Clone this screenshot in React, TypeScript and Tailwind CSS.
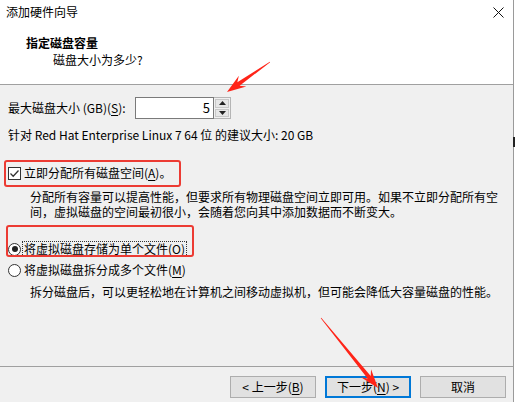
import React from 'react';

const FONT = "font-['Noto_Sans_CJK_SC','Noto_Sans',sans-serif]";

// red annotation arrow: thin tail, swept arrowhead
const Arrow: React.FC<{ x1: number; y1: number; x2: number; y2: number }> = ({ x1, y1, x2, y2 }) => {
  const len = Math.hypot(x2 - x1, y2 - y1);
  const dx = (x2 - x1) / len;
  const dy = (y2 - y1) / len;
  const nx = -dy;
  const ny = dx;
  const L = 19;
  const W = 6.5;
  const bx = x2 - dx * L;
  const by = y2 - dy * L;
  const sx = x2 - dx * (L - 5);
  const sy = y2 - dy * (L - 5);
  const pts = [
    [x1 + nx * 0.3, y1 + ny * 0.3],
    [sx + nx * 2, sy + ny * 2],
    [bx + nx * W, by + ny * W],
    [x2, y2],
    [bx - nx * W, by - ny * W],
    [sx - nx * 2, sy - ny * 2],
    [x1 - nx * 0.3, y1 - ny * 0.3],
  ]
    .map((p) => p.join(','))
    .join(' ');
  return <polygon points={pts} fill="#ff2418" />;
};

const U: React.FC<{ children: React.ReactNode }> = ({ children }) => (
  <span className="underline underline-offset-2 decoration-1">{children}</span>
);

const Button: React.FC<{ children: React.ReactNode; focused?: boolean }> = ({ children, focused }) => (
  <div
    className={`w-[86px] h-[22px] flex items-center justify-center bg-[#e1e1e1] leading-none ${
      focused ? 'border-2 border-[#0078d7]' : 'border border-[#adadad]'
    }`}
  >
    {children}
  </div>
);

const App: React.FC = () => {
  return (
    <div className={`${FONT} relative w-[515px] h-[402px] overflow-hidden bg-white text-[12px] text-black pr-[1px]`}>
      <div className="h-full flex flex-col border-r border-[#9a9a9a]">
        {/* title bar */}
        <div className="h-[24px] flex items-center justify-between pl-[6px] pr-[9px]">
          <span className="leading-none">添加硬件向导</span>
          <svg width="11" height="11" viewBox="0 0 11 11">
            <path d="M0.5 0.5 L10.5 10.5 M10.5 0.5 L0.5 10.5" stroke="#111" strokeWidth="1" />
          </svg>
        </div>

        {/* header */}
        <div className="h-[61px] flex flex-col pl-[26px] pt-[11px] bg-white border-b border-[#a0a0a0]">
          <div className="leading-[16px] font-bold">指定磁盘容量</div>
          <div className="leading-[17px] pl-[27px]">磁盘大小为多少?</div>
        </div>

        {/* body */}
        <div className="flex-1 flex flex-col bg-[#f0f0f0] pl-[8px] pt-[12px]">
          <div className="flex items-center h-[22px]">
            <span className="w-[127px]">
              最大磁盘大小 (GB)(<U>S</U>):
            </span>
            <div className="w-[79px] h-[22px] bg-white border border-[#7a7a7a] flex items-center justify-end pr-[3px] text-[13px]">
              5
            </div>
            <div className="w-[17px] h-[22px] border border-[#b5b5b5] border-l-0 flex flex-col bg-[#f0f0f0] p-[1px] gap-[1px]">
              <div className="flex-1 border border-[#c8c8c8] bg-[#e6e6e6] flex items-center justify-center">
                <svg width="7" height="4" viewBox="0 0 7 4">
                  <path d="M0 4 L3.5 0 L7 4 Z" fill="#222" />
                </svg>
              </div>
              <div className="flex-1 border border-[#c8c8c8] bg-[#e6e6e6] flex items-center justify-center">
                <svg width="7" height="4" viewBox="0 0 7 4">
                  <path d="M0 0 L3.5 4 L7 0 Z" fill="#222" />
                </svg>
              </div>
            </div>
          </div>

          <div className="mt-[8px] leading-[15px]">针对 Red Hat Enterprise Linux 7 64 位 的建议大小: 20 GB</div>

          <div className="mt-[23px] h-[16px] flex items-center gap-[3px]">
            <div className="w-[13px] h-[13px] border border-[#333] bg-white flex items-center justify-center">
              <svg width="11" height="11" viewBox="0 0 11 11">
                <path d="M1.5 5.5 L4.2 8.2 L9.5 2.5" stroke="#333" strokeWidth="1.3" fill="none" />
              </svg>
            </div>
            <span className="leading-none">
              立即分配所有磁盘空间(<U>A</U>)。
            </span>
          </div>

          <div className="mt-[8px] pl-[22px] leading-[15px]">
            <div>分配所有容量可以提高性能，但要求所有物理磁盘空间立即可用。如果不立即分配所有空</div>
            <div>间，虚拟磁盘的空间最初很小，会随着您向其中添加数据而不断变大。</div>
          </div>

          <div className="mt-[22px] h-[16px] flex items-center gap-[2px]">
            <div className="w-[13px] h-[13px] rounded-full border border-[#333] bg-white flex items-center justify-center">
              <div className="w-[6px] h-[6px] rounded-full bg-[#222]" />
            </div>
            <span className="leading-[14px] outline-1 outline-dotted outline-[#333] px-[1px]">
              将虚拟磁盘存储为单个文件(<U>O</U>)
            </span>
          </div>

          <div className="mt-[5px] h-[16px] flex items-center gap-[3px]">
            <div className="w-[13px] h-[13px] rounded-full border border-[#333] bg-white" />
            <span className="leading-none">
              将虚拟磁盘拆分成多个文件(<U>M</U>)
            </span>
          </div>

          <div className="mt-[6px] pl-[22px] leading-[15px]">
            拆分磁盘后，可以更轻松地在计算机之间移动虚拟机，但可能会降低大容量磁盘的性能。
          </div>
        </div>

        {/* footer */}
        <div className="h-[36px] bg-[#f0f0f0] border-t border-[#a0a0a0] flex justify-end items-start gap-[9px] pr-[7px] pt-[9px]">
          <Button>
            &lt; 上一步(<U>B</U>)
          </Button>
          <Button focused>
            下一步(<U>N</U>) &gt;
          </Button>
          <Button>取消</Button>
        </div>
      </div>

      {/* annotations */}
      <div className="absolute left-[4px] top-[160px] w-[177px] h-[27px] border-2 border-[#ec3b33] rounded-[3px]" />
      <div className="absolute left-[6px] top-[225px] w-[188px] h-[32px] border-2 border-[#ec3b33] rounded-[3px]" />
      <div className="absolute left-[513px] top-[137px] w-[2px] h-[10px] bg-[#222]" />
      <svg className="absolute left-0 top-0 pointer-events-none" width="515" height="402">
        <Arrow x1={270} y1={62} x2={227} y2={92} />
        <Arrow x1={321} y1={318} x2={378} y2={388} />
      </svg>
    </div>
  );
};

export default App;
